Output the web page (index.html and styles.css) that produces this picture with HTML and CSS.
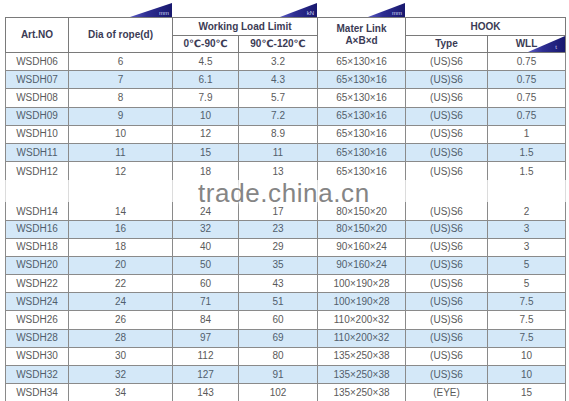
FILE: index.html
```html
<!DOCTYPE html>
<html>
<head>
<meta charset="utf-8">
<link rel="stylesheet" href="styles.css">
</head>
<body>
<div class="page">
<table class="spec">
<colgroup>
<col class="c1"><col class="c2"><col class="c3"><col class="c4"><col class="c5"><col class="c6"><col class="c7">
</colgroup>
<thead>
<tr class="h1">
<th rowspan="2">Art.NO</th>
<th rowspan="2">Dia of rope(d)<span class="tag tag-top"><svg viewBox="0 0 42 14" width="42" height="14"><defs><linearGradient id="g1" x1="0" y1="0" x2="1" y2="0"><stop offset="0" stop-color="#5a5ac4"/><stop offset="0.4" stop-color="#2e2e92"/><stop offset="1" stop-color="#18186e"/></linearGradient></defs><polygon points="0,14 42,0 42,14" fill="url(#g1)"/><text x="39" y="12" text-anchor="end" class="tag-text">mm</text></svg></span></th>
<th colspan="2">Working Load Limit<span class="tag tag-top"><svg viewBox="0 0 37 14" width="37" height="14"><defs><linearGradient id="g2" x1="0" y1="0" x2="1" y2="0"><stop offset="0" stop-color="#5a5ac4"/><stop offset="0.4" stop-color="#2e2e92"/><stop offset="1" stop-color="#18186e"/></linearGradient></defs><polygon points="0,14 37,0 37,14" fill="url(#g2)"/><text x="34" y="12" text-anchor="end" class="tag-text">kN</text></svg></span></th>
<th rowspan="2">Mater Link<br>A×B×d<span class="tag tag-top"><svg viewBox="0 0 37 14" width="37" height="14"><defs><linearGradient id="g3" x1="0" y1="0" x2="1" y2="0"><stop offset="0" stop-color="#5a5ac4"/><stop offset="0.4" stop-color="#2e2e92"/><stop offset="1" stop-color="#18186e"/></linearGradient></defs><polygon points="0,14 37,0 37,14" fill="url(#g3)"/><text x="34" y="12" text-anchor="end" class="tag-text">mm</text></svg></span></th>
<th colspan="2">HOOK</th>
</tr>
<tr class="h2">
<th>0℃-90℃</th>
<th>90℃-120℃</th>
<th>Type</th>
<th>WLL<span class="tag tag-in"><svg viewBox="0 0 37 16" width="37" height="16"><defs><linearGradient id="g4" x1="0" y1="0" x2="1" y2="0"><stop offset="0" stop-color="#5a5ac4"/><stop offset="0.4" stop-color="#2e2e92"/><stop offset="1" stop-color="#18186e"/></linearGradient></defs><polygon points="0,16 37,0 37,16" fill="url(#g4)"/><text x="29" y="13" text-anchor="end" class="tag-text">t</text></svg></span></th>
</tr>
</thead>
<tbody>
<tr><td>WSDH06</td><td>6</td><td>4.5</td><td>3.2</td><td>65×130×16</td><td>(US)S6</td><td>0.75</td></tr>
<tr class="alt"><td>WSDH07</td><td>7</td><td>6.1</td><td>4.3</td><td>65×130×16</td><td>(US)S6</td><td>0.75</td></tr>
<tr><td>WSDH08</td><td>8</td><td>7.9</td><td>5.7</td><td>65×130×16</td><td>(US)S6</td><td>0.75</td></tr>
<tr class="alt"><td>WSDH09</td><td>9</td><td>10</td><td>7.2</td><td>65×130×16</td><td>(US)S6</td><td>0.75</td></tr>
<tr><td>WSDH10</td><td>10</td><td>12</td><td>8.9</td><td>65×130×16</td><td>(US)S6</td><td>1</td></tr>
<tr class="alt"><td>WSDH11</td><td>11</td><td>15</td><td>11</td><td>65×130×16</td><td>(US)S6</td><td>1.5</td></tr>
<tr class="top-open"><td>WSDH12</td><td>12</td><td>18</td><td>13</td><td>65×130×16</td><td>(US)S6</td><td>1.5</td></tr>
<tr class="blur-row"><td></td><td></td><td></td><td></td><td></td><td></td><td></td></tr>
<tr class="bottom-open"><td>WSDH14</td><td>14</td><td>24</td><td>17</td><td>80×150×20</td><td>(US)S6</td><td>2</td></tr>
<tr class="alt"><td>WSDH16</td><td>16</td><td>32</td><td>23</td><td>80×150×20</td><td>(US)S6</td><td>3</td></tr>
<tr><td>WSDH18</td><td>18</td><td>40</td><td>29</td><td>90×160×24</td><td>(US)S6</td><td>3</td></tr>
<tr class="alt"><td>WSDH20</td><td>20</td><td>50</td><td>35</td><td>90×160×24</td><td>(US)S6</td><td>5</td></tr>
<tr><td>WSDH22</td><td>22</td><td>60</td><td>43</td><td>100×190×28</td><td>(US)S6</td><td>5</td></tr>
<tr class="alt"><td>WSDH24</td><td>24</td><td>71</td><td>51</td><td>100×190×28</td><td>(US)S6</td><td>7.5</td></tr>
<tr><td>WSDH26</td><td>26</td><td>84</td><td>60</td><td>110×200×32</td><td>(US)S6</td><td>7.5</td></tr>
<tr class="alt"><td>WSDH28</td><td>28</td><td>97</td><td>69</td><td>110×200×32</td><td>(US)S6</td><td>7.5</td></tr>
<tr><td>WSDH30</td><td>30</td><td>112</td><td>80</td><td>135×250×38</td><td>(US)S6</td><td>10</td></tr>
<tr class="alt"><td>WSDH32</td><td>32</td><td>127</td><td>91</td><td>135×250×38</td><td>(US)S6</td><td>10</td></tr>
<tr><td>WSDH34</td><td>34</td><td>143</td><td>102</td><td>135×250×38</td><td>(EYE)</td><td>15</td></tr>
</tbody>
</table>
<div class="watermark">trade.china.cn</div>
</div>
</body>
</html>
```

FILE: styles.css
```css
html, body {
  margin: 0;
  background: #ffffff;
}
body {
  font-family: "Liberation Sans", Arial, "DejaVu Sans", sans-serif;
}
.page {
  position: relative;
  padding: 17px 0 0 5px;
}
.spec {
  border-collapse: collapse;
  table-layout: fixed;
  width: 560px;
}
.c1 { width: 63px; }
.c2 { width: 104px; }
.c3 { width: 66px; }
.c4 { width: 79px; }
.c5 { width: 88px; }
.c6 { width: 82px; }
.c7 { width: 78px; }
.spec th,
.spec td {
  border: 1px solid #8a8a8a;
  padding: 0;
  text-align: center;
  font-size: 10px;
  line-height: 12px;
}
.spec th {
  position: relative;
  color: #3b3b55;
  font-weight: bold;
  border-color: #7a7a7a;
}
.h1 { height: 18px; }
.h2 { height: 17px; }
.spec tbody tr { height: 18.2px; }
.spec td {
  color: #5a5a5a;
}
.spec tr.alt td {
  background: #d4e8f8;
  color: #515e6c;
}
.spec tr.top-open td {
  border-bottom: none;
  vertical-align: top;
  padding-top: 4px;
}
.spec tr.blur-row { height: 22px; }
.spec tr.blur-row td {
  border-top: none;
  border-bottom: none;
  border-left-color: #dcdcdc;
  border-right-color: #dcdcdc;
}
.spec tr.bottom-open td {
  border-top: none;
  vertical-align: bottom;
  padding-bottom: 2px;
}
.tag {
  position: absolute;
  right: 0;
  line-height: 0;
}
.tag-top {
  bottom: 100%;
  margin-bottom: 1px;
}
.tag-in {
  bottom: 0;
}
.tag-text {
  font-family: "Liberation Sans", Arial, sans-serif;
  font-size: 6px;
  font-weight: normal;
  fill: #d2d2f6;
}
.watermark {
  position: absolute;
  left: 198px;
  top: 178px;
  font-size: 26px;
  letter-spacing: 0.6px;
  color: #858585;
  font-weight: normal;
  text-shadow: 0 0 6px #ffffff, 0 0 3px #ffffff;
}
```
